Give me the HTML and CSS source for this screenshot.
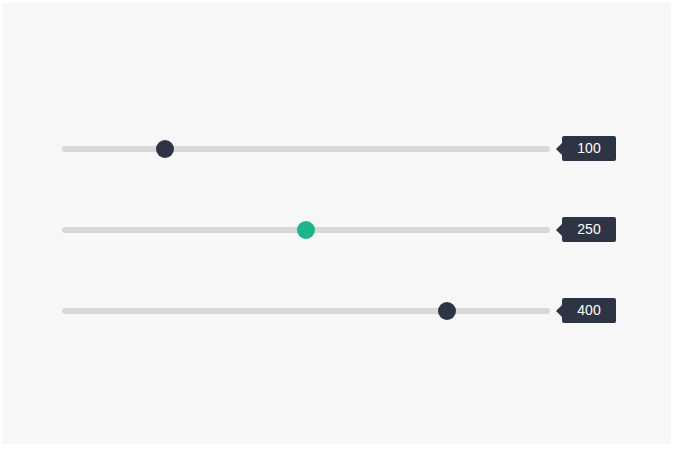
FILE: index.html
```html
<!DOCTYPE html>
<html lang="en">
<head>
    <meta charset="UTF-8">
    <meta name="viewport" content="width=device-width, initial-scale=1.0">
    <title>Range sliders</title>
    <link rel="stylesheet" href="styles.css">
</head>
<body>
    <div class="panel">
        <!-- value range is 0 - 500, thumb position = value / 500 -->
        <div class="slider">
            <div class="track">
                <div class="rail">
                    <span class="thumb" style="left: 20%;"></span>
                </div>
            </div>
            <div class="value">100</div>
        </div>
        <div class="slider">
            <div class="track">
                <div class="rail">
                    <span class="thumb active" style="left: 50%;"></span>
                </div>
            </div>
            <div class="value">250</div>
        </div>
        <div class="slider">
            <div class="track">
                <div class="rail">
                    <span class="thumb" style="left: 80%;"></span>
                </div>
            </div>
            <div class="value">400</div>
        </div>
    </div>
</body>
</html>
```

FILE: styles.css
```css
body {
    margin: 0;
    background: #fff;
    font-family: "Liberation Sans", Arial, sans-serif;
}

.panel {
    margin: 3px 7px 0 2px;
    height: 441px;
    background: #f7f7f7;
    box-sizing: border-box;
    padding: 133px 0 0 60px;
    display: flex;
    flex-direction: column;
    gap: 56px;
}

.slider {
    display: flex;
    align-items: center;
    height: 25px;
}

/* grey bar, inner rail keeps the thumb inside the ends */
.track {
    width: 488px;
    height: 6px;
    border-radius: 3px;
    background: #d8d8d8;
    padding: 0 9px;
    box-sizing: border-box;
}

.rail {
    position: relative;
    height: 100%;
}

.thumb {
    position: absolute;
    top: 50%;
    width: 18px;
    height: 18px;
    border-radius: 50%;
    background: #2c3446;
    transform: translate(-50%, -50%);
}

.thumb.active {
    background: #1db48b;
}

.value {
    position: relative;
    margin-left: 12px;
    width: 54px;
    height: 25px;
    line-height: 25px;
    border-radius: 2px;
    background: #2d3545;
    color: #fff;
    font-size: 14px;
    text-align: center;
}

.value::before {
    content: "";
    position: absolute;
    left: -6px;
    top: 7px;
    border-style: solid;
    border-width: 6px 6px 6px 0;
    border-color: transparent #2d3545 transparent transparent;
}
```
